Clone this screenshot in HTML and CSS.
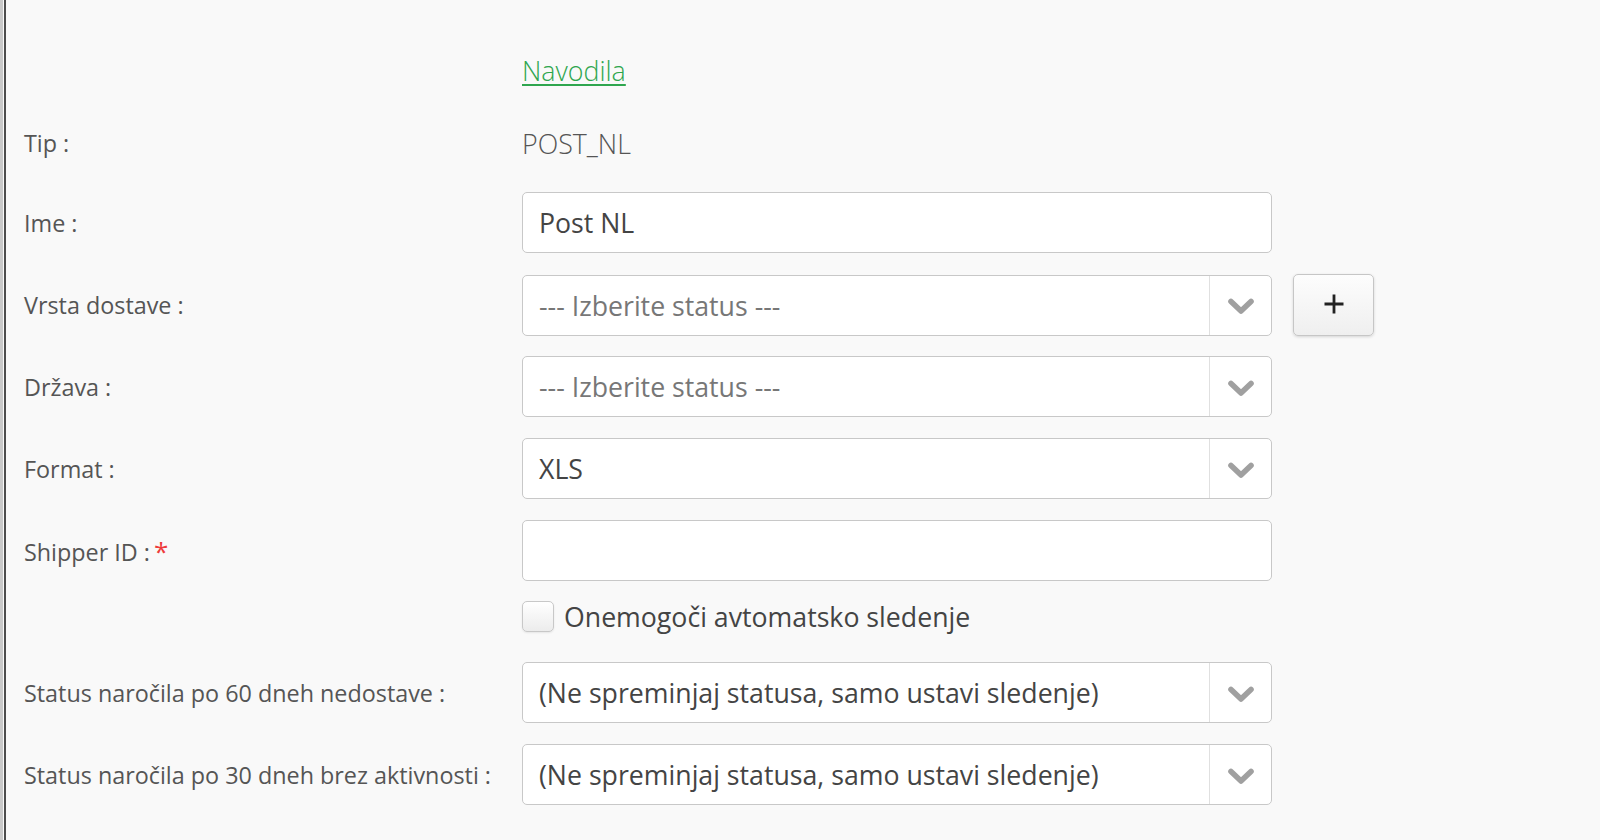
FILE: index.html
```html
<!DOCTYPE html>
<html lang="sl">
<head>
  <meta charset="UTF-8" />
  <meta name="viewport" content="width=device-width, initial-scale=1.0"/>
  <title>Post NL</title>
  <link rel="stylesheet" href="styles.css">
</head>
<body>
  <div class="frame">
    <div class="page">
      <form class="form">
        <div class="row row-link">
          <div class="label"></div>
          <div class="field"><a href="#" class="help-link">Navodila</a></div>
        </div>
        <div class="row row-static">
          <div class="label">Tip :</div>
          <div class="field static">POST_NL</div>
        </div>
        <div class="row">
          <label class="label" for="name">Ime :</label>
          <div class="field"><input id="name" class="input" type="text" value="Post NL"></div>
        </div>
        <div class="row">
          <div class="label">Vrsta dostave :</div>
          <div class="field">
            <div class="select">
              <span class="select-value placeholder">--- Izberite status ---</span>
              <span class="select-arrow">
                <svg width="26" height="18" viewBox="0 0 26 18"><polyline points="3,3.5 13,13 23,3.5" fill="none" stroke="#a0a0a0" stroke-width="5.6" stroke-linecap="round" stroke-linejoin="round"/></svg>
              </span>
            </div>
          </div>
          <button type="button" class="add-btn">
            <svg width="22" height="22" viewBox="0 0 22 22"><path d="M11 1.5v19M1.5 11h19" stroke="#222" stroke-width="2.8"/></svg>
          </button>
        </div>
        <div class="row">
          <div class="label">Država :</div>
          <div class="field">
            <div class="select">
              <span class="select-value placeholder">--- Izberite status ---</span>
              <span class="select-arrow">
                <svg width="26" height="18" viewBox="0 0 26 18"><polyline points="3,3.5 13,13 23,3.5" fill="none" stroke="#a0a0a0" stroke-width="5.6" stroke-linecap="round" stroke-linejoin="round"/></svg>
              </span>
            </div>
          </div>
        </div>
        <div class="row">
          <div class="label">Format :</div>
          <div class="field">
            <div class="select">
              <span class="select-value">XLS</span>
              <span class="select-arrow">
                <svg width="26" height="18" viewBox="0 0 26 18"><polyline points="3,3.5 13,13 23,3.5" fill="none" stroke="#a0a0a0" stroke-width="5.6" stroke-linecap="round" stroke-linejoin="round"/></svg>
              </span>
            </div>
          </div>
        </div>
        <div class="row">
          <label class="label" for="shipper">Shipper ID : <span class="required">*</span></label>
          <div class="field"><input id="shipper" class="input" type="text" value=""></div>
        </div>
        <div class="row row-check">
          <div class="label"></div>
          <div class="field">
            <label class="check">
              <span class="check-box"></span>
              <span>Onemogoči avtomatsko sledenje</span>
            </label>
          </div>
        </div>
        <div class="row">
          <div class="label">Status naročila po 60 dneh nedostave :</div>
          <div class="field">
            <div class="select">
              <span class="select-value">(Ne spreminjaj statusa, samo ustavi sledenje)</span>
              <span class="select-arrow">
                <svg width="26" height="18" viewBox="0 0 26 18"><polyline points="3,3.5 13,13 23,3.5" fill="none" stroke="#a0a0a0" stroke-width="5.6" stroke-linecap="round" stroke-linejoin="round"/></svg>
              </span>
            </div>
          </div>
        </div>
        <div class="row">
          <div class="label">Status naročila po 30 dneh brez aktivnosti :</div>
          <div class="field">
            <div class="select">
              <span class="select-value">(Ne spreminjaj statusa, samo ustavi sledenje)</span>
              <span class="select-arrow">
                <svg width="26" height="18" viewBox="0 0 26 18"><polyline points="3,3.5 13,13 23,3.5" fill="none" stroke="#a0a0a0" stroke-width="5.6" stroke-linecap="round" stroke-linejoin="round"/></svg>
              </span>
            </div>
          </div>
        </div>
      </form>
    </div>
  </div>
</body>
</html>
```

FILE: styles.css
```css
* {
  box-sizing: border-box;
  margin: 0;
  padding: 0;
}

body {
  background: #f9f9f9;
  color: #555;
  font-family: 'Open Sans', 'Noto Sans', sans-serif;
  overflow: hidden;
}

.frame {
  border-left: 3px solid #c9c9c9;
  min-height: 100vh;
}

.page {
  margin-left: 1px;
  border-left: 2px solid #4d4d4d;
  min-height: 100vh;
  padding: 40px 0 0 18px;
}

.form {
  display: flex;
  flex-direction: column;
  gap: 21px;
}

.row {
  display: grid;
  grid-template-columns: 477px 750px auto;
  column-gap: 21px;
  align-items: center;
  height: 61px;
}

.row-link {
  margin-bottom: 1px;
}

.row-static {
  height: 40px;
  margin-bottom: 8px;
}

.row-check {
  height: 41px;
  margin-top: -4px;
  margin-bottom: 2px;
  align-items: start;
}

.label {
  font-size: 23.35px;
  color: #555;
  white-space: nowrap;
}

.required {
  color: #ee3b3b;
  font-size: 26px;
  margin-left: -2px;
}

.help-link {
  font-size: 26.8px;
  font-weight: 300;
  color: #2fa64f;
  text-decoration: underline;
  text-decoration-thickness: 2px;
  text-underline-offset: 3px;
}

.static {
  font-size: 26.8px;
  font-weight: 300;
  color: #555;
}

.input {
  width: 100%;
  height: 61px;
  border: 1px solid #c8c8c8;
  border-radius: 5px;
  background: #fff;
  padding: 0 16px;
  font-family: inherit;
  font-size: 26.7px;
  color: #444;
  outline: none;
}

.select {
  display: flex;
  height: 61px;
  border: 1px solid #c8c8c8;
  border-radius: 5px;
  background: #fff;
}

.select-value {
  flex: 1;
  display: flex;
  align-items: center;
  padding-left: 16px;
  font-size: 26.7px;
  color: #444;
  white-space: nowrap;
}

.select-value.placeholder {
  color: #777;
}

.select-arrow {
  width: 62px;
  border-left: 1px solid #e0e0e0;
  display: flex;
  align-items: center;
  justify-content: center;
  padding-top: 4px;
}

.add-btn {
  width: 81px;
  height: 62px;
  border: 1px solid #c6c6c6;
  border-radius: 5px;
  background: linear-gradient(#fdfdfd, #efefef);
  box-shadow: 0 1px 3px rgba(0, 0, 0, 0.15);
  display: flex;
  align-items: center;
  justify-content: center;
  cursor: pointer;
  padding-bottom: 2px;
}

.check {
  display: flex;
  align-items: center;
  gap: 10px;
  font-size: 26.7px;
  color: #444;
  cursor: pointer;
}

.check-box {
  width: 32px;
  height: 31px;
  border: 1px solid #c8c8c8;
  border-radius: 5px;
  background: linear-gradient(#fff, #ececec);
  box-shadow: 0 1px 2px rgba(0, 0, 0, 0.08);
}
```
